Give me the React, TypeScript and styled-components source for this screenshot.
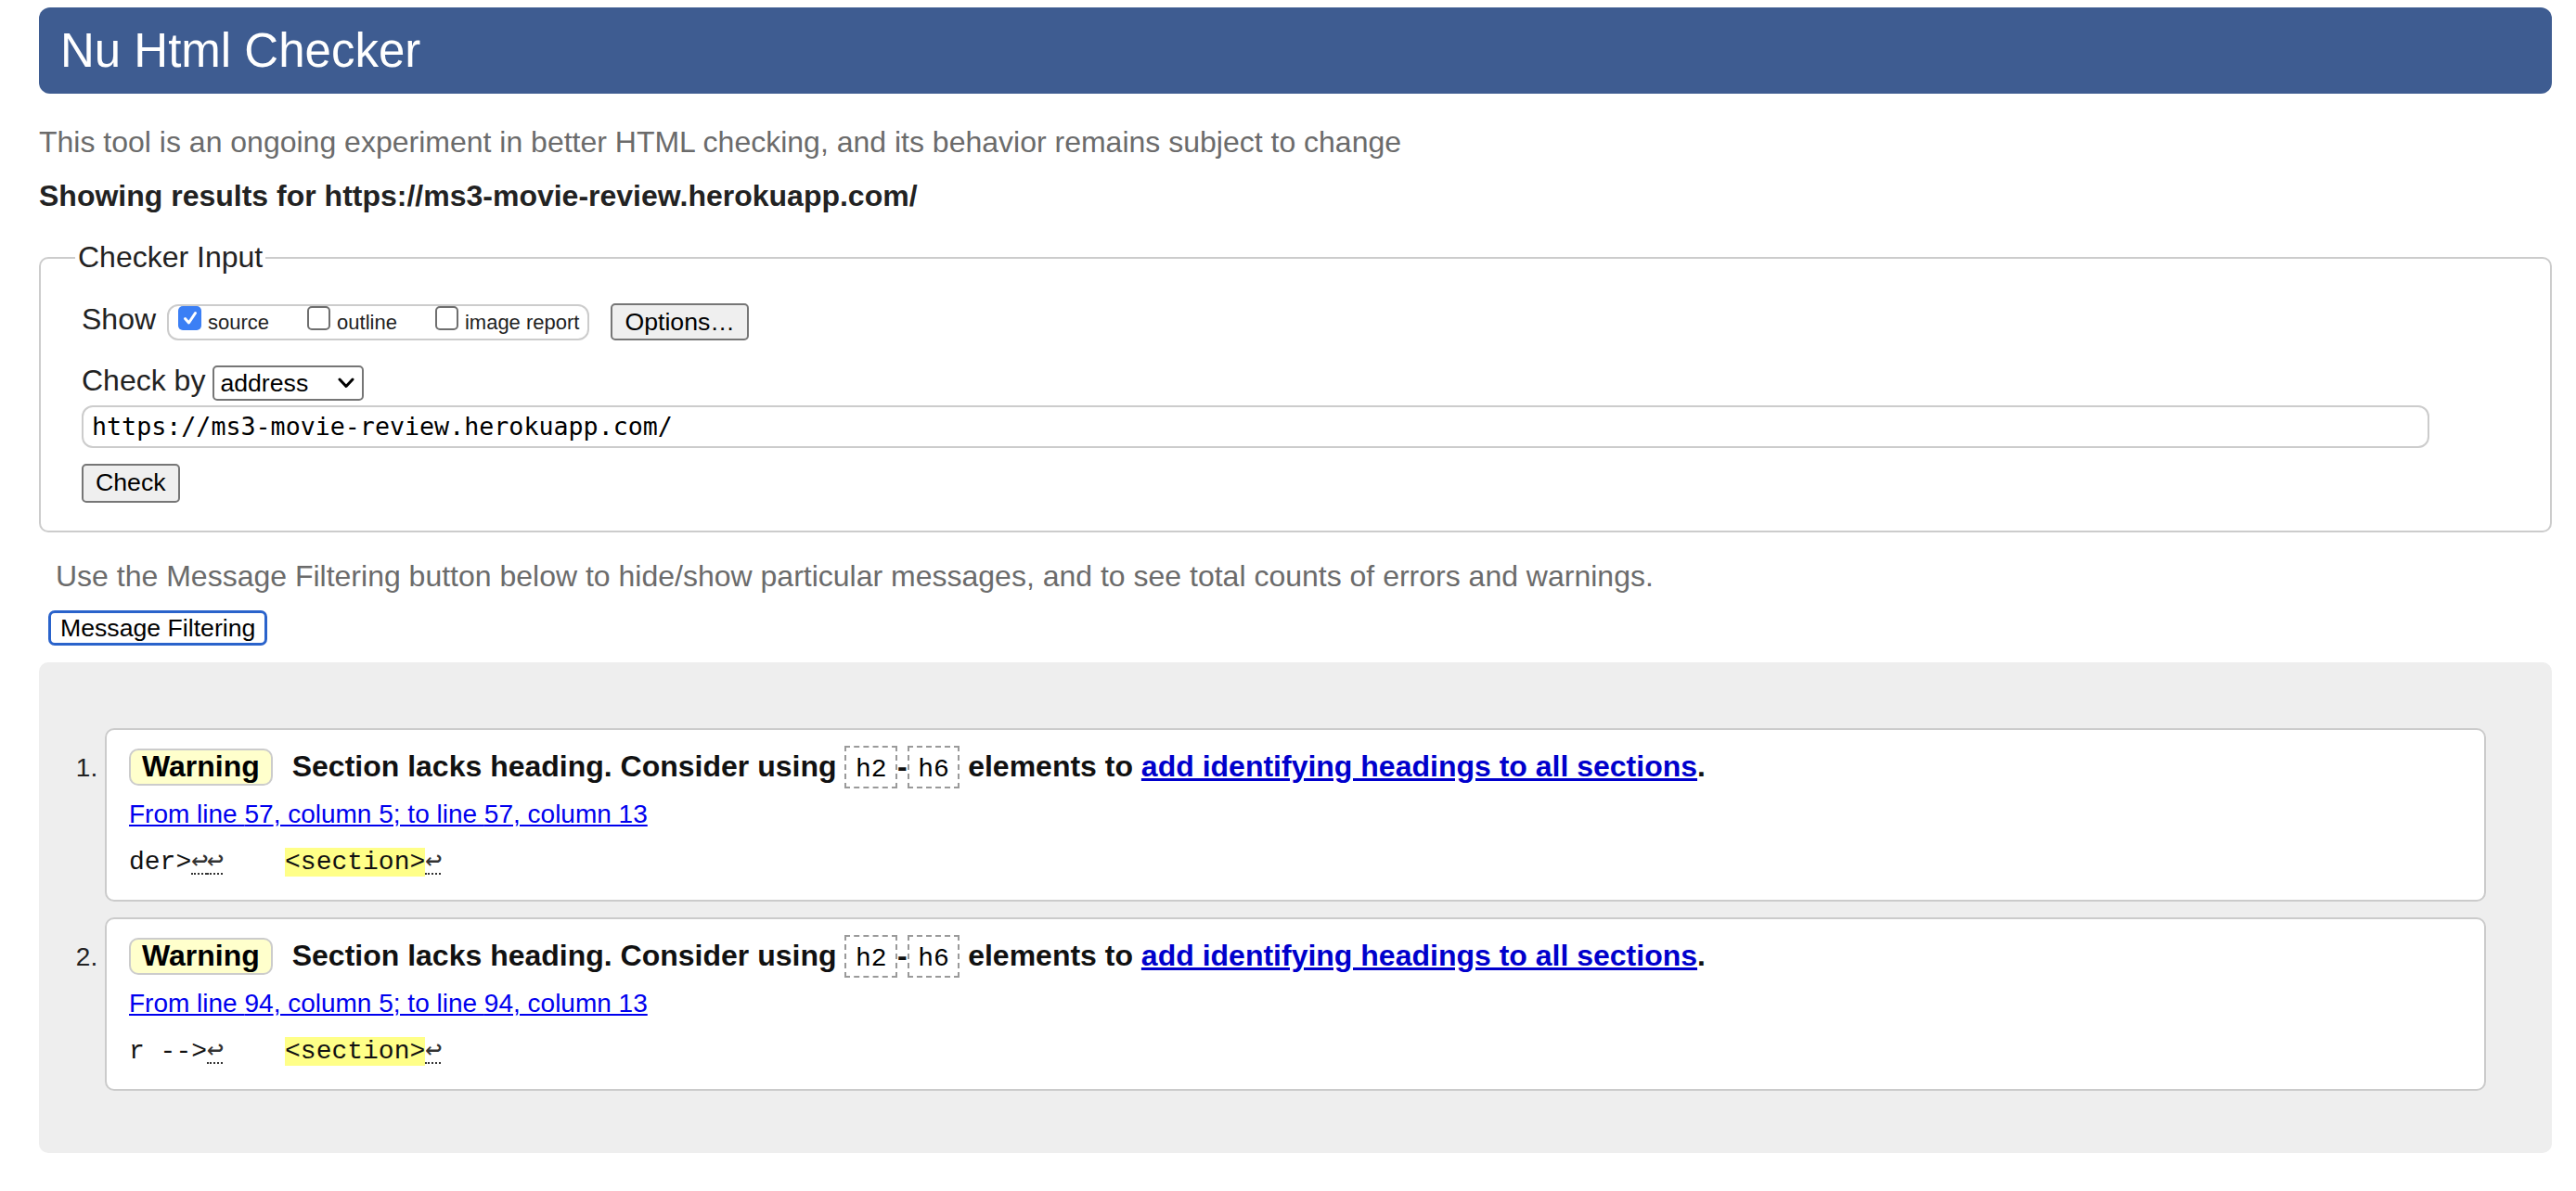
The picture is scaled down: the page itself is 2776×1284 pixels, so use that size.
import React from "react";
import styled, { createGlobalStyle } from "styled-components";

const GlobalStyle = createGlobalStyle`
  html, body { margin: 0; padding: 0; background: #ffffff; }
  body {
    font-family: "Liberation Sans", Arial, Helvetica, sans-serif;
    color: #222222;
  }
  * { box-sizing: border-box; }
`;

const Page = styled.div`
  padding: 8px 26px 40px 42px;
`;

const Banner = styled.h1`
  margin: 0;
  height: 93px;
  padding-left: 23px;
  background: #3e5c91;
  border-radius: 12px;
  color: #ffffff;
  font-size: 51px;
  font-weight: normal;
  line-height: 93px;
`;

const Para = styled.p<{ $muted?: boolean; $bold?: boolean; $top: number; $indent?: number }>`
  margin: ${(p) => p.$top}px 0 0;
  padding-left: ${(p) => p.$indent ?? 0}px;
  font-size: 32px;
  line-height: 37px;
  font-weight: ${(p) => (p.$bold ? "bold" : "normal")};
  color: ${(p) => (p.$muted ? "#6b6b6b" : "#222222")};
`;

const Fieldset = styled.fieldset`
  margin: 29px 0 0;
  min-width: 0;
  border: 2px solid #cccccc;
  border-radius: 10px;
  padding: 31px 130px 30px 44px;
  display: flex;
  flex-direction: column;
  align-items: flex-start;
`;

const Legend = styled.legend`
  margin-left: -7px;
  padding: 0 3px;
  font-size: 32px;
  line-height: 37px;
  color: #222222;
`;

const Row = styled.div<{ $top?: number }>`
  display: flex;
  align-items: flex-start;
  margin-top: ${(p) => p.$top ?? 0}px;
`;

const RowLabel = styled.span<{ $shift?: number }>`
  font-size: 32px;
  line-height: 37px;
  margin-top: ${(p) => p.$shift ?? 0}px;
  margin-right: 8px;
  white-space: nowrap;
`;

const CheckGroup = styled.span`
  display: inline-flex;
  align-items: flex-start;
  height: 39px;
  margin-top: 1px;
  margin-left: 4px;
  padding: 0 9px 0 10px;
  border: 2px solid #cccccc;
  border-radius: 12px;
  gap: 41px;
`;

const CheckLabel = styled.label`
  display: inline-flex;
  align-items: flex-start;
  gap: 7px;
  font-size: 22px;
`;

const Box = styled.span<{ $checked?: boolean }>`
  width: 25px;
  height: 26px;
  border-radius: 5px;
  display: inline-flex;
  align-items: center;
  justify-content: center;
  background: ${(p) => (p.$checked ? "#3b7ff5" : "#ffffff")};
  border: ${(p) => (p.$checked ? "none" : "2px solid #6f6f6f")};
`;

const CheckText = styled.span`
  padding-top: 5px;
  line-height: 26px;
  color: #222222;
  white-space: nowrap;
`;

const GrayButton = styled.button<{ $left?: number }>`
  margin: 0 0 0 ${(p) => p.$left ?? 0}px;
  padding: 2.5px 13px;
  font-family: "Liberation Sans", Arial, sans-serif;
  font-size: 26.67px;
  line-height: normal;
  color: #000000;
  background: #efefef;
  border: 2px solid #767676;
  border-radius: 5px;
`;

const CheckButton = styled(GrayButton)`
  margin-top: 17px;
  padding: 3.7px 13px;
`;

const SelectBox = styled.span`
  display: inline-flex;
  align-items: center;
  justify-content: space-between;
  width: 163px;
  margin-top: 2px;
  padding: 1.5px 8px 1.5px 6px;
  border: 2px solid #767676;
  border-radius: 5px;
  background: #ffffff;
  font-size: 26.67px;
  line-height: 30.6px;
  color: #000000;
`;

const UrlInput = styled.input`
  margin-top: 5px;
  width: 100%;
  height: 46px;
  padding: 0 9px;
  border: 2px solid #cccccc;
  border-radius: 12px;
  font-family: "DejaVu Sans Mono", "Liberation Mono", monospace;
  font-size: 26.67px;
  color: #000000;
  background: #ffffff;
  outline: none;
`;

const FilterButton = styled.button`
  margin: 18px 0 0 10px;
  padding: 0.7px 10px;
  font-family: "Liberation Sans", Arial, sans-serif;
  font-size: 26.67px;
  line-height: normal;
  color: #000000;
  background: #ffffff;
  border: 3px solid #2a63cb;
  border-radius: 7px;
`;

const Results = styled.div`
  margin-top: 18px;
  background: #eeeeee;
  border-radius: 10px;
  padding: 71px 71px 67px 71px;
`;

const MessageList = styled.ol`
  margin: 0;
  padding: 0;
  list-style: decimal outside;
`;

const MessageItem = styled.li`
  background: #ffffff;
  border: 2px solid #cbcbcb;
  border-radius: 10px;
  padding: 17px 24px 24px;
  margin-bottom: 17px;
  font-size: 28px;
  color: #222222;
  &:last-child { margin-bottom: 0; }
`;

const MessageLine = styled.p`
  margin: 0;
  font-size: 32px;
  font-weight: bold;
  color: #111111;
`;

const Badge = styled.strong`
  display: inline-block;
  margin-right: 12px;
  padding: 0 12px 2px;
  line-height: 34px;
  background: #ffffcc;
  border: 2px solid #cccccc;
  border-radius: 10px;
  color: #000000;
`;

const Code = styled.code`
  display: inline-block;
  padding: 7.5px 9.5px 3.5px;
  border: 2px dashed #9a9a9a;
  font-family: "Liberation Mono", "Courier New", monospace;
  font-size: 28px;
  font-weight: normal;
  line-height: normal;
  color: #000000;
`;

const Link = styled.a<{ $strong?: boolean }>`
  color: ${(p) => (p.$strong ? "#0000cc" : "#0000ee")};
  text-decoration: underline;
`;

const Location = styled.p`
  margin: 12px 0 0;
  font-size: 28px;
  line-height: 32px;
`;

const Extract = styled.p`
  margin: 19px 0 0;
  font-family: "Liberation Mono", "Courier New", monospace;
  font-size: 28px;
  line-height: 32px;
  white-space: pre;
  color: #111111;
`;

const Highlight = styled.b`
  font-weight: normal;
  background: #ffff88;
`;

const LineFeed = styled.abbr`
  display: inline-block;
  width: 16.8px;
  line-height: 28px;
  font-family: "DejaVu Sans Mono", monospace;
  font-size: 30px;
  color: #333333;
  text-decoration: none;
  border-bottom: 2px dotted #333333;
`;

const CheckMark = () => (
  <svg width="18" height="18" viewBox="0 0 18 18" aria-hidden="true">
    <path d="M3.5 9.5 L7.5 14 L14.5 3.5" fill="none" stroke="#ffffff" strokeWidth="3" strokeLinecap="round" strokeLinejoin="round" />
  </svg>
);

const Chevron = () => (
  <svg width="18" height="12" viewBox="0 0 18 12" aria-hidden="true">
    <polyline points="2,2 9,9.5 16,2" fill="none" stroke="#000000" strokeWidth="3" strokeLinecap="round" strokeLinejoin="round" />
  </svg>
);

const LF = () => <LineFeed title="Line break">↩</LineFeed>;

type Msg = { line: number; before: React.ReactNode };

const messages: Msg[] = [
  { line: 57, before: <>der&gt;<LF /><LF />    </> },
  { line: 94, before: <>r --&gt;<LF />    </> },
];

export default function App() {
  return (
    <Page>
      <GlobalStyle />
      <Banner>Nu Html Checker</Banner>
      <Para $muted $top={34}>
        This tool is an ongoing experiment in better HTML checking, and its behavior remains subject to change
      </Para>
      <Para $bold $top={21}>Showing results for https://ms3-movie-review.herokuapp.com/</Para>

      <Fieldset>
        <Legend>Checker Input</Legend>
        <Row>
          <RowLabel $shift={-1}>Show</RowLabel>
          <CheckGroup>
            <CheckLabel>
              <Box $checked><CheckMark /></Box>
              <CheckText>source</CheckText>
            </CheckLabel>
            <CheckLabel>
              <Box />
              <CheckText>outline</CheckText>
            </CheckLabel>
            <CheckLabel>
              <Box />
              <CheckText>image report</CheckText>
            </CheckLabel>
          </CheckGroup>
          <GrayButton $left={23}>Options…</GrayButton>
        </Row>
        <Row $top={25}>
          <RowLabel>Check by</RowLabel>
          <SelectBox>
            address
            <Chevron />
          </SelectBox>
        </Row>
        <UrlInput readOnly value="https://ms3-movie-review.herokuapp.com/" />
        <CheckButton>Check</CheckButton>
      </Fieldset>

      <Para $muted $top={29} $indent={18}>
        Use the Message Filtering button below to hide/show particular messages, and to see total counts of errors and warnings.
      </Para>
      <FilterButton>Message Filtering</FilterButton>

      <Results>
        <MessageList>
          {messages.map((m) => (
            <MessageItem key={m.line}>
              <MessageLine>
                <Badge>Warning</Badge> Section lacks heading. Consider using <Code>h2</Code>-<Code>h6</Code> elements to{" "}
                <Link $strong href="#">add identifying headings to all sections</Link>.
              </MessageLine>
              <Location>
                <Link href="#">From line {m.line}, column 5; to line {m.line}, column 13</Link>
              </Location>
              <Extract>
                {m.before}
                <Highlight>&lt;section&gt;</Highlight>
                <LF />
              </Extract>
            </MessageItem>
          ))}
        </MessageList>
      </Results>
    </Page>
  );
}
